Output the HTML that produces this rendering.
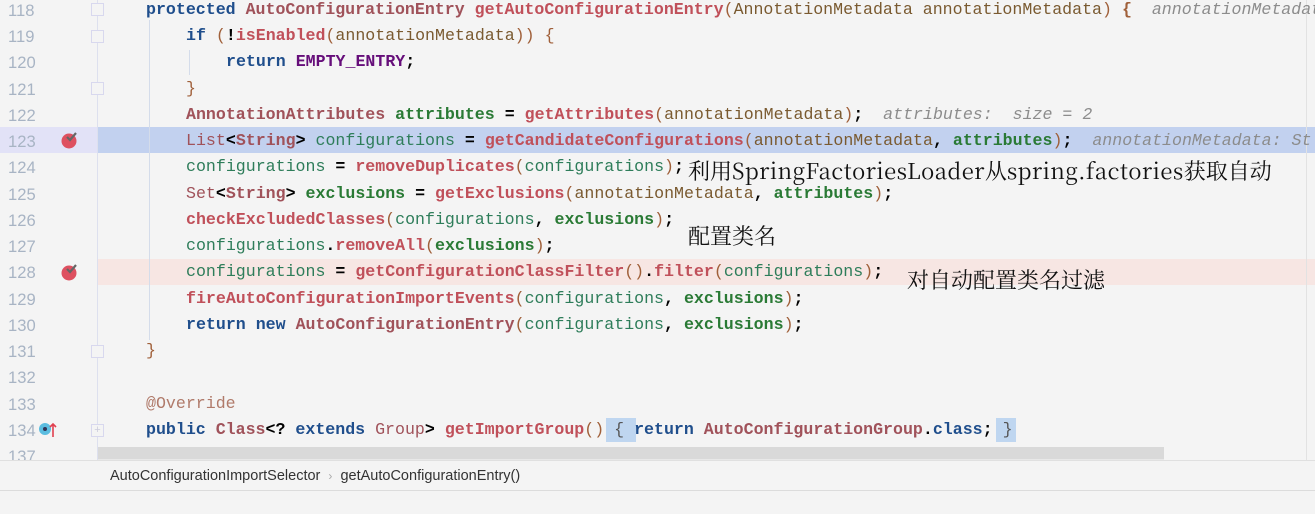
<!DOCTYPE html>
<html><head><meta charset="utf-8"><style>
body{margin:0;width:1315px;height:514px;background:#f4f4f4;position:relative;overflow:hidden;font-family:"Liberation Mono",monospace}
.ln{position:absolute;left:8px;width:40px;color:#a8b4c4;font-size:16.6px;font-family:"Liberation Sans",sans-serif}
.c{position:absolute;white-space:pre;font-size:16.6px;line-height:26.25px;letter-spacing:0}
.k{color:#1f4e8c;font-weight:bold}
.m{color:#c0505a;font-weight:bold}
.t{color:#a0525a}
.tb{color:#a0525a;font-weight:bold}
.p{color:#a0603a}
.pa{color:#7a5a30}
.v{color:#2e7d5a}
.f{color:#2a7a35;font-weight:bold}
.cn{color:#660e7a;font-weight:bold}
.o{color:#000;font-weight:bold}
.g{color:#8c8c8c;font-style:italic}
.an{color:#b07a6a}
.cj{position:absolute;font-family:"Noto Serif CJK SC","Liberation Serif",serif;font-size:22px;color:#111;white-space:pre}
.lt{letter-spacing:0.45px}
</style></head><body>
<div style="position:absolute;left:0;top:127px;width:98px;height:26px;background:#e2e2f7"></div>
<div style="position:absolute;left:98px;top:127px;width:1217px;height:26px;background:#c2d1ef"></div>
<div style="position:absolute;left:98px;top:259px;width:1217px;height:26px;background:#f7e6e3"></div>
<div style="position:absolute;left:97px;top:0;width:1px;height:460px;background:#dde0ee"></div>
<div style="position:absolute;left:149px;top:20px;width:1px;height:320px;background:#d4dcea"></div>
<div style="position:absolute;left:189px;top:50px;width:1px;height:25px;background:#d4dcea"></div>
<div style="position:absolute;left:1306px;top:0;width:1px;height:460px;background:#e2e2e2"></div>
<div style="position:absolute;left:91px;top:3px;width:11px;height:11px;border:1px solid #d8d8ee;background:#f4f4f4"></div>
<div style="position:absolute;left:91px;top:30px;width:11px;height:11px;border:1px solid #d8d8ee;background:#f4f4f4"></div>
<div style="position:absolute;left:91px;top:82px;width:11px;height:11px;border:1px solid #d8d8ee;background:#f4f4f4"></div>
<div style="position:absolute;left:91px;top:345px;width:11px;height:11px;border:1px solid #d8d8ee;background:#f4f4f4"></div>
<div style="position:absolute;left:91px;top:424px;width:11px;height:11px;border:1px solid #d8d8ee;background:#f4f4f4;color:#ccd;font-size:11px;line-height:11px;text-align:center;font-family:'Liberation Sans'">+</div>
<svg style="position:absolute;left:60px;top:130px" width="20" height="20"><circle cx="9" cy="11" r="7.5" fill="#de5060"/><path d="M7 7l3 3 6-7" stroke="#666" stroke-width="2.2" fill="none"/></svg>
<svg style="position:absolute;left:60px;top:262px" width="20" height="20"><circle cx="9" cy="11" r="7.5" fill="#de5060"/><path d="M7 7l3 3 6-7" stroke="#666" stroke-width="2.2" fill="none"/></svg>
<svg style="position:absolute;left:38px;top:421px" width="22" height="18"><circle cx="7" cy="8" r="6" fill="#5bbde0"/><circle cx="7" cy="8" r="2" fill="#335"/><path d="M15 16V3M12 6l3-3 3 3" stroke="#e04050" stroke-width="1.6" fill="none"/></svg>

<div class="ln" style="top:1px">118</div><div class="ln" style="top:27px">119</div><div class="ln" style="top:53px">120</div><div class="ln" style="top:80px">121</div><div class="ln" style="top:106px">122</div><div class="ln" style="top:132px">123</div><div class="ln" style="top:158px">124</div><div class="ln" style="top:185px">125</div><div class="ln" style="top:211px">126</div><div class="ln" style="top:237px">127</div><div class="ln" style="top:263px">128</div><div class="ln" style="top:290px">129</div><div class="ln" style="top:316px">130</div><div class="ln" style="top:342px">131</div><div class="ln" style="top:368px">132</div><div class="ln" style="top:395px">133</div><div class="ln" style="top:421px">134</div><div class="ln" style="top:447px">137</div>

<div class="c" style="left:146px;top:-3px"><span class="k">protected</span> <span class="tb">AutoConfigurationEntry</span> <span class="m">getAutoConfigurationEntry</span><span class="p">(</span><span class="pa">AnnotationMetadata annotationMetadata</span><span class="p">)</span> <span class="p" style="font-weight:bold">{</span>  <span class="g">annotationMetadata: </span></div>
<div class="c" style="left:186px;top:23px"><span class="k">if</span> <span class="p">(</span><span class="o">!</span><span class="m">isEnabled</span><span class="p">(</span><span class="pa">annotationMetadata</span><span class="p">))</span> <span class="p">{</span></div>
<div class="c" style="left:226px;top:49px"><span class="k">return</span> <span class="cn">EMPTY_ENTRY</span><span class="o">;</span></div>
<div class="c" style="left:186px;top:76px"><span class="p">}</span></div>
<div class="c" style="left:186px;top:102px"><span class="tb">AnnotationAttributes</span> <span class="f">attributes</span> <span class="o">=</span> <span class="m">getAttributes</span><span class="p">(</span><span class="pa">annotationMetadata</span><span class="p">)</span><span class="o">;</span>  <span class="g">attributes:  size = 2</span></div>
<div class="c" style="left:186px;top:128px"><span class="t">List</span><span class="o">&lt;</span><span class="tb">String</span><span class="o">&gt;</span> <span class="v">configurations</span> <span class="o">=</span> <span class="m">getCandidateConfigurations</span><span class="p">(</span><span class="pa">annotationMetadata</span><span class="o">,</span> <span class="f">attributes</span><span class="p">)</span><span class="o">;</span>  <span class="g">annotationMetadata: St</span></div>
<div class="c" style="left:186px;top:154px"><span class="v">configurations</span> <span class="o">=</span> <span class="m">removeDuplicates</span><span class="p">(</span><span class="v">configurations</span><span class="p">)</span><span class="o">;</span></div>
<div class="c" style="left:186px;top:181px"><span class="t">Set</span><span class="o">&lt;</span><span class="tb">String</span><span class="o">&gt;</span> <span class="f">exclusions</span> <span class="o">=</span> <span class="m">getExclusions</span><span class="p">(</span><span class="pa">annotationMetadata</span><span class="o">,</span> <span class="f">attributes</span><span class="p">)</span><span class="o">;</span></div>
<div class="c" style="left:186px;top:207px"><span class="m">checkExcludedClasses</span><span class="p">(</span><span class="v">configurations</span><span class="o">,</span> <span class="f">exclusions</span><span class="p">)</span><span class="o">;</span></div>
<div class="c" style="left:186px;top:233px"><span class="v">configurations</span><span class="o">.</span><span class="m">removeAll</span><span class="p">(</span><span class="f">exclusions</span><span class="p">)</span><span class="o">;</span></div>
<div class="c" style="left:186px;top:259px"><span class="v">configurations</span> <span class="o">=</span> <span class="m">getConfigurationClassFilter</span><span class="p">()</span><span class="o">.</span><span class="m">filter</span><span class="p">(</span><span class="v">configurations</span><span class="p">)</span><span class="o">;</span></div>
<div class="c" style="left:186px;top:286px"><span class="m">fireAutoConfigurationImportEvents</span><span class="p">(</span><span class="v">configurations</span><span class="o">,</span> <span class="f">exclusions</span><span class="p">)</span><span class="o">;</span></div>
<div class="c" style="left:186px;top:312px"><span class="k">return new</span> <span class="tb">AutoConfigurationEntry</span><span class="p">(</span><span class="v">configurations</span><span class="o">,</span> <span class="f">exclusions</span><span class="p">)</span><span class="o">;</span></div>
<div class="c" style="left:146px;top:338px"><span class="p">}</span></div>
<div class="c" style="left:146px;top:391px"><span class="an">@Override</span></div>
<div style="position:absolute;left:606px;top:418px;width:30px;height:24px;background:#bfd6f0"></div>
<div style="position:absolute;left:996px;top:418px;width:20px;height:24px;background:#bfd6f0"></div>
<div class="c" style="left:146px;top:417px"><span class="k">public</span> <span class="tb">Class</span><span class="o">&lt;?</span> <span class="k">extends</span> <span class="t">Group</span><span class="o">&gt;</span> <span class="m">getImportGroup</span><span class="p">()</span> <span style="color:#555">{</span> <span class="k">return</span> <span class="tb">AutoConfigurationGroup</span><span class="o">.</span><span class="k">class</span><span class="o">;</span> <span style="color:#555">}</span></div>

<div class="cj" style="left:688px;top:155px">利用<span class="lt">SpringFactoriesLoader</span>从<span class="lt">spring.factories</span>获取自动</div>
<div class="cj" style="left:688px;top:220px">配置类名</div>
<div class="cj" style="left:907px;top:264px">对自动配置类名过滤</div>

<div style="position:absolute;left:98px;top:447px;width:1066px;height:12px;background:#d9d9d9;border-bottom:1px solid #e8e8e8"></div>
<div style="position:absolute;left:0;top:460px;width:1315px;height:1px;background:#e0e0e0"></div>
<div style="position:absolute;left:0;top:490px;width:1315px;height:1px;background:#dcdcdc"></div>
<div style="position:absolute;left:0;top:461px;width:1315px;height:29px;background:#f4f4f4"></div>
<div style="position:absolute;left:110px;top:468px;font-family:'Liberation Sans',sans-serif;font-size:14.5px;color:#333;white-space:pre">AutoConfigurationImportSelector  <span style="color:#aaa;font-size:12px">›</span>  getAutoConfigurationEntry()</div>
</body></html>
